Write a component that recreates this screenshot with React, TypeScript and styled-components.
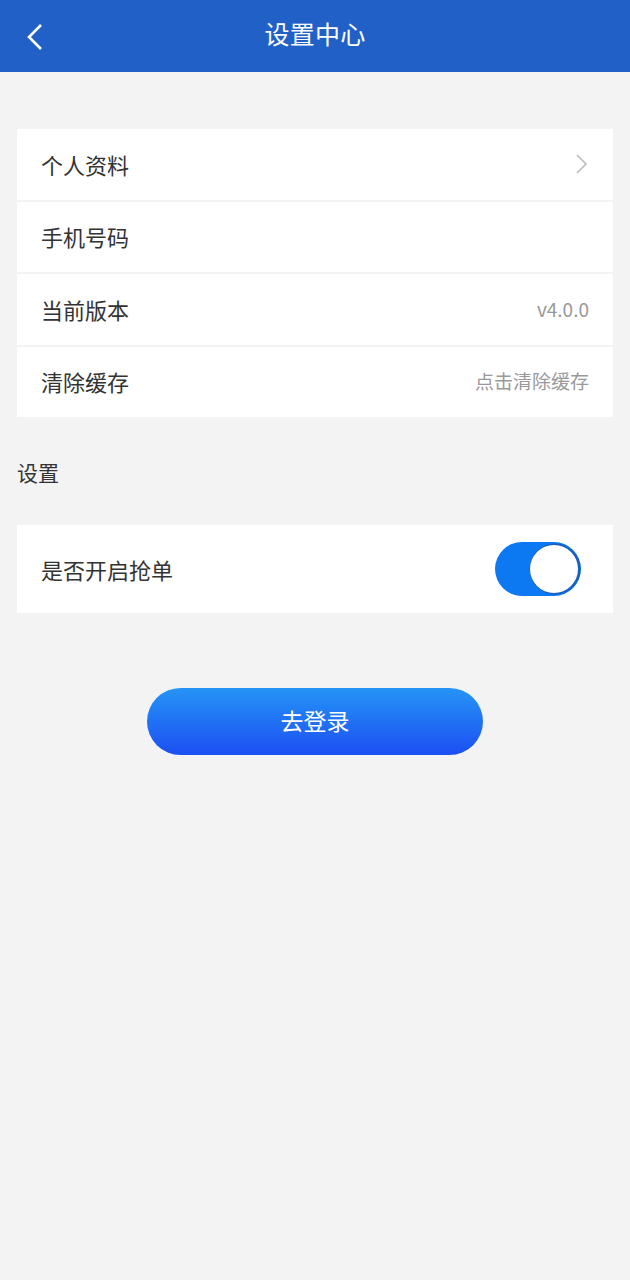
import React, { useState } from 'react';
import styled, { createGlobalStyle } from 'styled-components';

const GlobalStyle = createGlobalStyle`
  html, body {
    margin: 0;
    padding: 0;
    background: #f3f3f3;
    font-family: "Noto Sans CJK SC", "Noto Sans", Roboto, sans-serif;
  }
`;

const Page = styled.div`
  min-height: 1280px;
  background: #f3f3f3;
`;

const Header = styled.header`
  height: 72px;
  background: #2161c7;
  display: grid;
  grid-template-columns: 72px 1fr 72px;
  align-items: center;
`;

const BackButton = styled.button`
  border: none;
  background: none;
  padding: 2px 0 0 24px;
  height: 72px;
  display: flex;
  align-items: center;
  cursor: pointer;
`;

const Title = styled.h1`
  margin: 0 0 5px;
  text-align: center;
  font-size: 25px;
  line-height: 1;
  font-weight: 400;
  color: #fff;
  letter-spacing: 0.3px;
`;

const Content = styled.main`
  padding: 57px 17px 0;
`;

const Card = styled.section`
  background: #fff;
  display: flex;
  flex-direction: column;
`;

const Row = styled.div<{ $tall?: boolean }>`
  height: ${({ $tall }) => ($tall ? '88px' : '70.5px')};
  display: flex;
  align-items: center;
  justify-content: space-between;
  padding: 0 24px;
  & + & {
    border-top: 2px solid #f3f3f3;
  }
`;

const Label = styled.span`
  font-size: 22px;
  line-height: 1;
  padding-bottom: 1px;
  color: #333;
`;

const Value = styled.span`
  font-size: 19px;
  line-height: 1;
  padding-bottom: 2px;
  color: #999;
`;

const SectionTitle = styled.div`
  font-size: 21px;
  color: #333;
  height: 108px;
  padding-top: 1px;
  box-sizing: border-box;
  display: flex;
  align-items: center;
`;

const Switch = styled.button<{ $on: boolean }>`
  width: 86px;
  height: 54px;
  border-radius: 27px;
  border: none;
  padding: 3px;
  margin-right: 8px;
  background: ${({ $on }) => ($on ? '#0c79f2' : '#e0e0e0')};
  display: flex;
  justify-content: ${({ $on }) => ($on ? 'flex-end' : 'flex-start')};
  cursor: pointer;
`;

const Knob = styled.span`
  width: 48px;
  height: 48px;
  border-radius: 50%;
  background: #fff;
  box-shadow: 1px 0 0 1.5px #1a5fc0;
`;

const ButtonWrap = styled.div`
  display: flex;
  justify-content: center;
  padding-top: 75px;
`;

const LoginButton = styled.button`
  width: 336px;
  height: 67px;
  border: none;
  border-radius: 34px;
  background: linear-gradient(180deg, #2594f6 0%, #1c4ff2 100%);
  color: #fff;
  font-family: inherit;
  font-size: 23px;
  line-height: 1;
  padding-bottom: 4px;
  cursor: pointer;
`;

const Chevron = () => (
  <svg width="14" height="22" viewBox="0 0 14 22">
    <path d="M2 2 L11 11 L2 20" fill="none" stroke="#bbb" strokeWidth="1.6" />
  </svg>
);

export default function App() {
  const [grab, setGrab] = useState(true);

  return (
    <Page>
      <GlobalStyle />
      <Header>
        <BackButton aria-label="返回">
          <svg width="22" height="30" viewBox="0 0 22 30">
            <path d="M17 3 L5 15 L17 27" fill="none" stroke="#fff" strokeWidth="2.6" />
          </svg>
        </BackButton>
        <Title>设置中心</Title>
        <div />
      </Header>
      <Content>
        <Card>
          <Row>
            <Label>个人资料</Label>
            <Chevron />
          </Row>
          <Row>
            <Label>手机号码</Label>
          </Row>
          <Row>
            <Label>当前版本</Label>
            <Value>v4.0.0</Value>
          </Row>
          <Row>
            <Label>清除缓存</Label>
            <Value>点击清除缓存</Value>
          </Row>
        </Card>
        <SectionTitle>设置</SectionTitle>
        <Card>
          <Row $tall>
            <Label>是否开启抢单</Label>
            <Switch $on={grab} onClick={() => setGrab(!grab)}>
              <Knob />
            </Switch>
          </Row>
        </Card>
        <ButtonWrap>
          <LoginButton>去登录</LoginButton>
        </ButtonWrap>
      </Content>
    </Page>
  );
}
